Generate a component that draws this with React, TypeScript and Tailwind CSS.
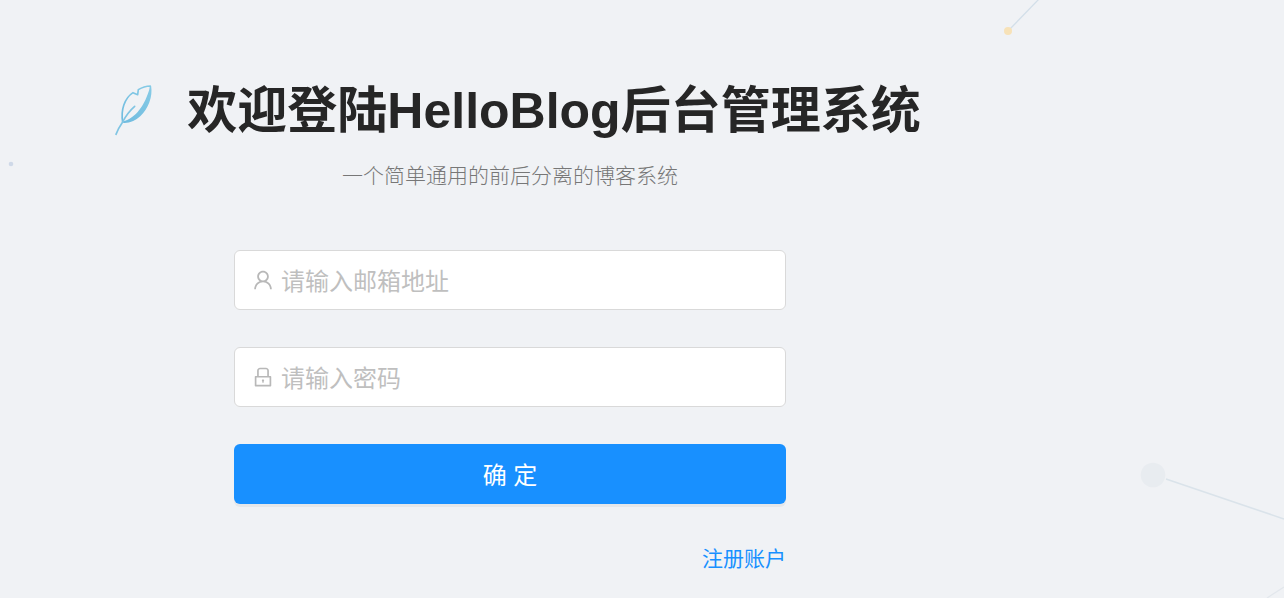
import { useState } from 'react';
import type { FormEvent, ReactNode } from 'react';
import { AiOutlineLock, AiOutlineUser } from 'react-icons/ai';

function FeatherLogo() {
  return (
    <svg viewBox="-4 25 192 198" className="h-[66px] w-16 shrink-0" fill="none" aria-hidden="true">
      <defs>
        <linearGradient id="feather" x1="60" y1="160" x2="152" y2="50" gradientUnits="userSpaceOnUse">
          <stop offset="0" stopColor="#6fbbdf" />
          <stop offset="1" stopColor="#86cbe6" />
        </linearGradient>
      </defs>
      <path
        d="M150 49C155 82 141 115 118 138C104 151 87 159 67 157C89 149 104 138 116 122C131 103 141 82 150 49Z"
        fill="url(#feather)"
      />
      <path
        d="M67 157C61 122 72 86 98 69L112 75L114 60C125 53 136 49 150 49C155 82 141 115 118 138C104 151 87 159 67 157Z"
        stroke="url(#feather)"
        strokeWidth="5"
        strokeLinejoin="round"
      />
      <path
        d="M47 194C52 181 58 170 67 157C76 139 88 123 103 110"
        stroke="#80c5e3"
        strokeWidth="5"
        strokeLinecap="round"
      />
    </svg>
  );
}

function Backdrop() {
  return (
    <div className="pointer-events-none absolute inset-0" aria-hidden="true">
      <svg className="absolute left-0 top-40 h-2 w-4" viewBox="0 0 16 8">
        <circle cx="11" cy="4" r="2.3" fill="#cfd9e8" />
      </svg>
      <svg className="absolute right-[240px] top-0 h-10 w-11" viewBox="0 0 44 40">
        <path d="M10 29L39 -1" stroke="#d3dfe9" strokeWidth="1.3" />
        <circle cx="8" cy="31" r="4" fill="#f7e2b8" />
      </svg>
      <svg className="absolute right-0 top-[440px] h-[158px] w-[164px]" viewBox="0 0 164 158">
        <circle cx="33" cy="35" r="12.3" fill="#e8ecf0" />
        <path d="M46 39L164 79" stroke="#dae3ea" strokeWidth="1.6" />
        <path d="M147 158L164 147" stroke="#e2e7ec" strokeWidth="1.3" />
      </svg>
    </div>
  );
}

type FieldProps = {
  icon: ReactNode;
  label: string;
  type: string;
  value: string;
  onChange: (value: string) => void;
};

function Field({ icon, label, type, value, onChange }: FieldProps) {
  return (
    <label className="flex h-[60px] items-center gap-1.5 rounded-md border border-[#d9d9d9] bg-white px-4 text-2xl text-[#b8b8b8] focus-within:border-[#40a9ff]">
      {icon}
      <input
        type={type}
        aria-label={label}
        placeholder={label}
        value={value}
        onChange={(event) => onChange(event.target.value)}
        className="h-full min-w-0 flex-1 bg-transparent pt-1 text-[#262626] outline-none placeholder:text-[#bfbfbf]"
      />
    </label>
  );
}

export default function App() {
  const [email, setEmail] = useState('');
  const [password, setPassword] = useState('');

  const submit = (event: FormEvent) => event.preventDefault();

  return (
    <div className="relative min-h-screen overflow-hidden bg-[#f0f2f5] font-['Liberation_Sans','Noto_Sans_CJK_SC',sans-serif]">
      <Backdrop />
      <main className="relative flex w-full max-w-[1020px] flex-col items-center pb-4 pt-[78px]">
        <header className="flex flex-col items-center gap-4">
          <div className="flex items-center gap-6">
            <FeatherLogo />
            <h1 className="whitespace-nowrap text-[50px] font-bold leading-[66px] text-[#262626]">
              欢迎登陆HelloBlog后台管理系统
            </h1>
          </div>
          <p className="text-[21px] font-light leading-8 text-[#777777]">一个简单通用的前后分离的博客系统</p>
        </header>
        <form onSubmit={submit} className="mt-[58px] flex w-full max-w-[552px] flex-col gap-[37px]">
          <Field
            icon={<AiOutlineUser className="size-6 shrink-0" />}
            label="请输入邮箱地址"
            type="email"
            value={email}
            onChange={setEmail}
          />
          <Field
            icon={<AiOutlineLock className="size-6 shrink-0" />}
            label="请输入密码"
            type="password"
            value={password}
            onChange={setPassword}
          />
          <button
            type="submit"
            className="h-[60px] cursor-pointer rounded-md bg-[#1890ff] pt-1 text-2xl text-white shadow-[0_3px_0_rgba(0,0,0,0.045)] hover:bg-[#40a9ff]"
          >
            确 定
          </button>
          <a href="#register" className="self-end text-[21px] leading-9 text-[#1890ff]">
            注册账户
          </a>
        </form>
      </main>
    </div>
  );
}
